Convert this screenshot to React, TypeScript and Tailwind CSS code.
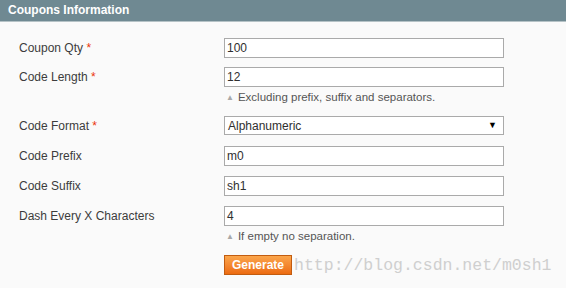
import React from "react";

const font = { fontFamily: '"Liberation Sans", Arial, sans-serif' };

function Label({ text, req }: { text: string; req?: boolean }) {
  return (
    <div className="w-[205px] shrink-0 text-[12px] leading-[20px] text-[#3c3c3c]">
      {text}
      {req && <span className="text-[#eb340a]"> *</span>}
    </div>
  );
}

function Input({ value }: { value: string }) {
  return (
    <div className="w-[280px] h-[20px] border border-[#aaaaaa] bg-white px-[2px] text-[12px] leading-[18px] text-[#2f2f2f]">
      {value}
    </div>
  );
}

function Note({ text }: { text: string }) {
  return (
    <div className="flex items-center h-[18px] mt-[2px] text-[11.5px] text-[#555555]">
      <span className="text-[8px] text-[#a8a8a8] ml-[2px] mr-[4px]">▲</span>
      {text}
    </div>
  );
}

export default function App() {
  return (
    <div className="w-[566px] h-[288px] bg-[#fafafa] overflow-hidden" style={font}>
      <div className="h-[22px] bg-[#6f8992] border-b border-[#b5c2c6] pl-[8px] text-[12px] font-bold leading-[21px] text-white">
        Coupons Information
      </div>
      <div className="pl-[19px] pt-[16px]">
        <div className="flex">
          <Label text="Coupon Qty" req />
          <Input value="100" />
        </div>
        <div className="flex mt-[9px]">
          <Label text="Code Length" req />
          <div>
            <Input value="12" />
            <Note text="Excluding prefix, suffix and separators." />
          </div>
        </div>
        <div className="flex mt-[9px]">
          <Label text="Code Format" req />
          <div className="w-[280px] h-[19px] border border-[#aaaaaa] bg-white px-[3px] flex items-center justify-between text-[12px] text-[#2f2f2f]">
            <span>Alphanumeric</span>
            <span className="text-[9px] mr-[3px] text-black">▼</span>
          </div>
        </div>
        <div className="flex mt-[10px]">
          <Label text="Code Prefix" />
          <Input value="m0" />
        </div>
        <div className="flex mt-[10px]">
          <Label text="Code Suffix" />
          <Input value="sh1" />
        </div>
        <div className="flex mt-[10px]">
          <Label text="Dash Every X Characters" />
          <div>
            <Input value="4" />
            <Note text="If empty no separation." />
          </div>
        </div>
        <div className="flex mt-[9px]">
          <div className="w-[205px] shrink-0" />
          <div className="flex items-end">
            <div className="h-[20px] px-[7px] border border-[#c25c10] bg-gradient-to-b from-[#fba54a] to-[#ec6b0f] text-white font-bold text-[12px] leading-[18px]">
              Generate
            </div>
            <div
              className="ml-[2px] text-[16.5px] leading-[18px] text-[#cfcfcf]"
              style={{ fontFamily: '"Liberation Mono", "Courier New", monospace' }}
            >
              http://blog.csdn.net/m0sh1
            </div>
          </div>
        </div>
      </div>
    </div>
  );
}
